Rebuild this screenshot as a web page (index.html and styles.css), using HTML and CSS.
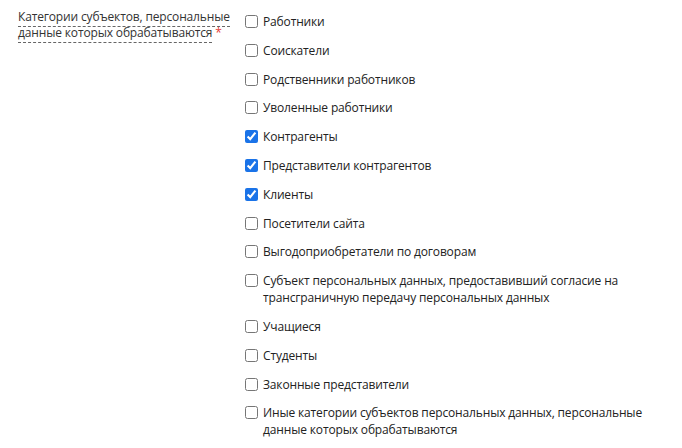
FILE: index.html
```html
<!DOCTYPE html>
<html lang="ru">
<head>
  <meta charset="UTF-8">
  <title>Категории субъектов</title>
  <link rel="stylesheet" href="styles.css">
</head>
<body>
  <div class="field">
    <div class="field-label">
      <span class="label-text">Категории субъектов, персональные данные которых обрабатываются</span> <span class="required">*</span>
    </div>
    <div class="options">
      <label class="option"><input type="checkbox"><span>Работники</span></label>
      <label class="option"><input type="checkbox"><span>Соискатели</span></label>
      <label class="option"><input type="checkbox"><span>Родственники работников</span></label>
      <label class="option"><input type="checkbox"><span>Уволенные работники</span></label>
      <label class="option"><input type="checkbox" checked><span>Контрагенты</span></label>
      <label class="option"><input type="checkbox" checked><span>Представители контрагентов</span></label>
      <label class="option"><input type="checkbox" checked><span>Клиенты</span></label>
      <label class="option"><input type="checkbox"><span>Посетители сайта</span></label>
      <label class="option"><input type="checkbox"><span>Выгодоприобретатели по договорам</span></label>
      <label class="option"><input type="checkbox"><span>Субъект персональных данных, предоставивший согласие на трансграничную передачу персональных данных</span></label>
      <label class="option"><input type="checkbox"><span>Учащиеся</span></label>
      <label class="option"><input type="checkbox"><span>Студенты</span></label>
      <label class="option"><input type="checkbox"><span>Законные представители</span></label>
      <label class="option"><input type="checkbox"><span>Иные категории субъектов персональных данных, персональные данные которых обрабатываются</span></label>
    </div>
  </div>
</body>
</html>
```

FILE: styles.css
```css
body {
  margin: 0;
  font-family: "Open Sans", Arial, sans-serif;
  font-size: 12px;
  letter-spacing: -0.15px;
  color: #222;
  background: #fff;
}

.field {
  display: flex;
  padding: 9px 0 0 18px;
}

.field-label {
  width: 224px;
  flex-shrink: 0;
  line-height: 16px;
  color: #333;
}

.label-text {
  border-bottom: 1px dashed #666;
  padding-bottom: 1px;
}

.required {
  color: #e53935;
}

.options {
  display: flex;
  flex-direction: column;
  gap: 11.8px;
  width: 420px;
  padding-top: 4px;
}

.option {
  display: flex;
  align-items: flex-start;
  line-height: 17px;
  cursor: pointer;
}

.option input {
  width: 13px;
  height: 13px;
  margin: 2px 5px 0 3px;
  flex-shrink: 0;
  accent-color: #1a73e8;
}
```
